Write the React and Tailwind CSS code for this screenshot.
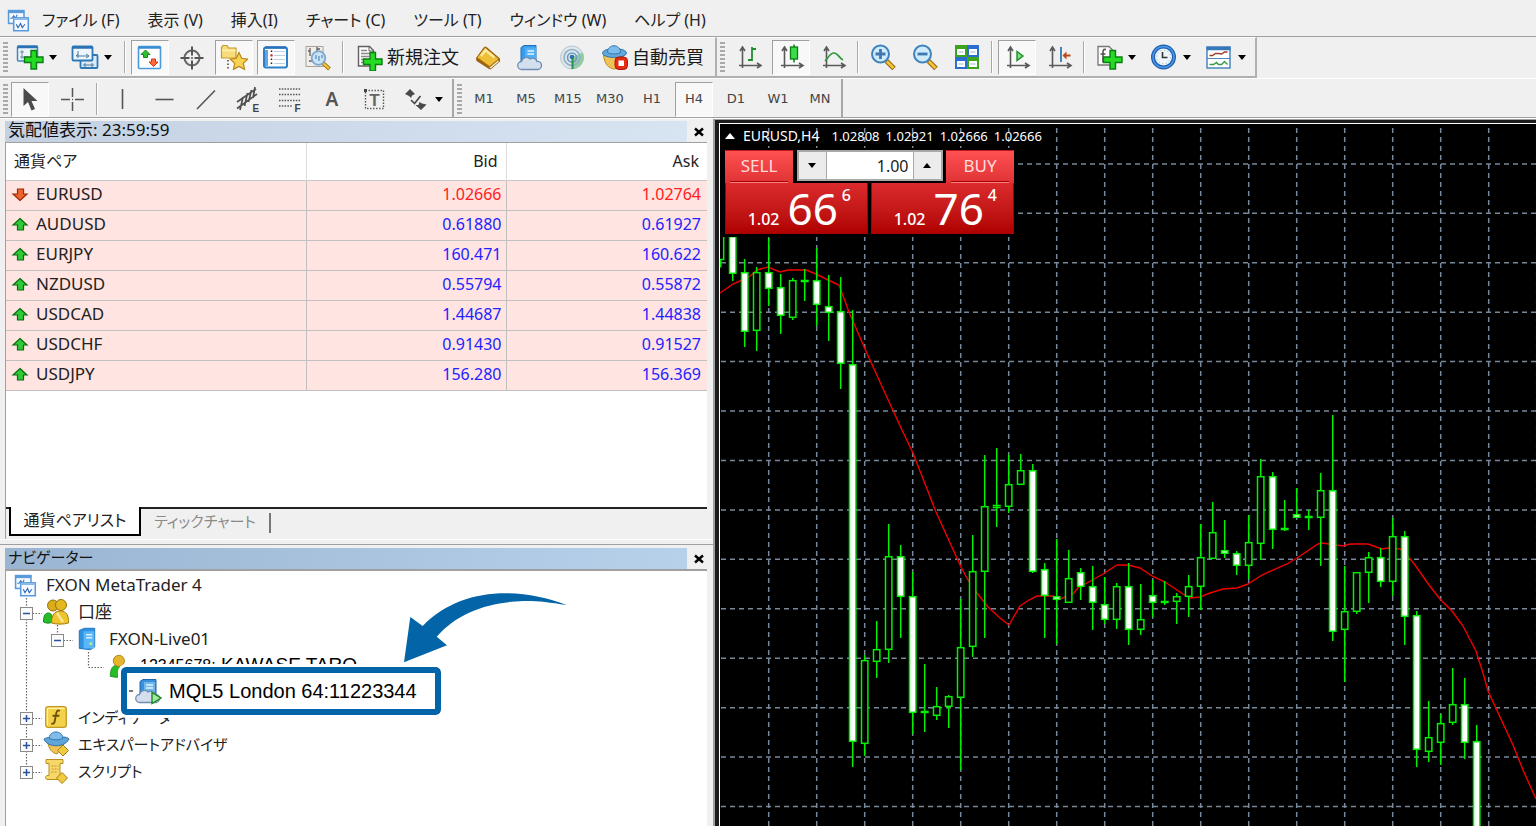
import React, { useState } from "react";

const menus = ["ファイル (F)", "表示 (V)", "挿入(I)", "チャート (C)", "ツール (T)", "ウィンドウ (W)", "ヘルプ (H)"];

const quotes = [
  { symbol: "EURUSD", bid: "1.02666", ask: "1.02764", up: false },
  { symbol: "AUDUSD", bid: "0.61880", ask: "0.61927", up: true },
  { symbol: "EURJPY", bid: "160.471", ask: "160.622", up: true },
  { symbol: "NZDUSD", bid: "0.55794", ask: "0.55872", up: true },
  { symbol: "USDCAD", bid: "1.44687", ask: "1.44838", up: true },
  { symbol: "USDCHF", bid: "0.91430", ask: "0.91527", up: true },
  { symbol: "USDJPY", bid: "156.280", ask: "156.369", up: true },
];

const timeframes = ["M1", "M5", "M15", "M30", "H1", "H4", "D1", "W1", "MN"];

// [high, body top, body bottom, low, bearish]
const candles = [
  [236, 236, 274, 281, 1], [259, 272, 332, 347, 1], [267, 272, 331, 351, 0], [238, 272, 289, 306, 1],
  [274, 287, 316, 334, 1], [278, 280, 318, 320, 0], [269, 281, 281, 301, 0], [248, 280, 305, 326, 1],
  [275, 306, 313, 341, 1], [277, 311, 364, 389, 1], [310, 364, 742, 767, 1], [655, 660, 744, 756, 0],
  [621, 649, 662, 678, 0], [524, 556, 650, 663, 0], [545, 556, 597, 638, 1], [572, 596, 713, 734, 1],
  [664, 712, 712, 732, 0], [687, 706, 716, 720, 0], [695, 696, 707, 728, 0], [599, 647, 698, 770, 0],
  [535, 571, 647, 657, 0], [455, 506, 572, 638, 0], [448, 505, 508, 527, 0], [455, 484, 507, 513, 0],
  [454, 470, 485, 485, 0], [464, 470, 572, 573, 1], [563, 569, 596, 638, 1], [539, 596, 600, 644, 1],
  [550, 578, 603, 603, 0], [568, 572, 587, 600, 1], [566, 586, 603, 630, 1], [577, 604, 620, 624, 1],
  [583, 586, 620, 629, 0], [563, 586, 630, 645, 1], [584, 619, 630, 635, 0], [580, 595, 603, 617, 1],
  [581, 601, 603, 605, 0], [593, 596, 602, 624, 0], [575, 586, 597, 617, 0], [524, 557, 587, 610, 0],
  [502, 532, 559, 559, 0], [520, 550, 554, 558, 1], [551, 553, 566, 575, 1], [515, 542, 566, 579, 0],
  [459, 476, 544, 560, 0], [472, 476, 530, 549, 1], [500, 529, 529, 531, 0], [488, 514, 518, 518, 1],
  [510, 517, 517, 530, 0], [473, 490, 518, 566, 0], [415, 490, 632, 641, 1], [566, 611, 630, 682, 0],
  [572, 572, 612, 614, 0], [552, 557, 573, 603, 0], [548, 557, 582, 587, 1], [518, 536, 582, 596, 0],
  [531, 536, 617, 645, 1], [611, 615, 750, 767, 1], [701, 737, 752, 762, 0], [714, 723, 743, 765, 0],
  [668, 704, 723, 725, 0], [678, 704, 743, 759, 1], [725, 741, 860, 860, 1],
];

const average =
  "720,293 733,284 742,280 749,277 757,270 768,267 780,272 788,270 806,270 816,274 828,280 839,285 849,312 865,349 " +
  "885,393 902,430 913,453 936,512 961,567 968,580 977,593 988,607 1000,618 1009,625 1020,606 1029,600 1037,596 " +
  "1053,596 1060,599 1073,594 1078,588 1103,574 1117,565 1128,565 1140,568 1152,576 1165,582 1183,594 1190,598 " +
  "1200,597 1210,593 1223,589 1237,588 1248,584 1262,575 1287,564 1297,558 1318,544 1322,543 1343,546 1350,544 " +
  "1368,544 1382,549 1388,548 1400,549 1407,555 1415,565 1429,585 1440,599 1452,611 1463,626 1476,651 1483,673 " +
  "1488,691 1513,745 1523,770 1536,799";

function Icon({ size = 28, children }) {
  return (
    <svg width={size} height={size} viewBox="0 0 28 28" fill="none" className="shrink-0" aria-hidden="true">
      {children}
    </svg>
  );
}

const PlusMark = () => (
  <path d="M15 7.500h5.500v6.500h6.500v5.500h-6.500v6.500h-5.500v-6.500h-6.500v-5.500h6.500z" fill="#25dc25" stroke="#0b7d10" strokeWidth="1.400" />
);

const NewChartIcon = () => (
  <Icon>
    <rect x="1.500" y="3" width="20" height="15" rx="1" fill="#eef6fd" stroke="#3f86c0" strokeWidth="1.500" />
    <path d="M1.500 4h20" stroke="#2a72b5" strokeWidth="2.500" />
    <path d="M6 7v9M4 9h4M4 14h8" stroke="#6c8ba8" />
    <PlusMark />
  </Icon>
);

const ProfilesIcon = () => (
  <Icon>
    <rect x="9.500" y="12" width="17" height="13" rx="1" fill="#dcebf8" stroke="#2f78b6" strokeWidth="1.800" />
    <path d="M12 22h11M14 20v4M21 20v4" stroke="#4e7898" />
    <rect x="1.500" y="3.500" width="20" height="14" rx="1" fill="#eef6fd" stroke="#2f78b6" strokeWidth="1.800" />
    <path d="M1.500 4.500h20" stroke="#2a72b5" strokeWidth="2.500" />
    <path d="M5 13h13M7 8v7M15 11l3 2-3 2M7 11l-2 2" stroke="#4e7898" />
  </Icon>
);

const MarketWatchIcon = () => (
  <Icon>
    <rect x="2.500" y="3.500" width="22" height="22" rx="1" fill="#fff" stroke="#4a9ade" strokeWidth="1.600" />
    <path d="M2.500 4.500h22" stroke="#3b8dd6" strokeWidth="2.500" />
    <path d="M9.500 7l4.500 4.500h-2.500v3h-4v-3H5z" fill="#2cc02c" stroke="#0d8a1a" />
    <path d="M17.500 23.500l4.500-4.500h-2.500v-3h-4v3H13z" fill="#ff6a3d" stroke="#d8350d" />
  </Icon>
);

const CrosshairIcon = () => (
  <Icon>
    <circle cx="14" cy="15" r="7.500" stroke="#666" strokeWidth="2" />
    <path d="M14 3.500v9M14 17.500v9M2.500 15h9M16.500 15h9" stroke="#555" strokeWidth="2" />
    <circle cx="14" cy="15" r="1" fill="#555" />
  </Icon>
);

const NavigatorIcon = () => (
  <Icon>
    <path d="M1.500 15V4.500l1.500-2h4l1.500 2.500h7.500v10z" fill="#f6dc7a" stroke="#c79a28" strokeWidth="1.200" />
    <path d="M2 7.500h13.500" stroke="#fff0b5" strokeWidth="1.500" />
    <path d="M8 17v10" stroke="#444" strokeWidth="1.500" strokeDasharray="1.500 2" />
    <path d="M19 9.500l2.700 5.800 6 .8-4.400 4.300 1.200 6-5.500-3-5.500 3 1.200-6-4.400-4.300 6-.8z" fill="#f8d253" stroke="#b98618" strokeWidth="1.200" />
  </Icon>
);

const TerminalIcon = () => (
  <Icon>
    <rect x="2" y="4.500" width="23" height="20" rx="2" fill="#fff" stroke="#2d7fc9" strokeWidth="2" />
    <path d="M3 4.500h21" stroke="#2672bb" strokeWidth="2.500" />
    <path d="M4.500 7v16" stroke="#5fa6e0" strokeWidth="3" />
    <path d="M12 8.500h11M12 12.500h11M12 16.500h11M12 20.500h11" stroke="#bcd0e2" />
    <path d="M9.500 7.500v15" stroke="#222" strokeWidth="1.500" strokeDasharray="1.500 2.500" />
    <path d="M9.500 11.500v2" stroke="#e02020" strokeWidth="2" />
  </Icon>
);

const TesterIcon = () => (
  <Icon>
    <rect x="2" y="3.500" width="17" height="20" fill="#f1eeea" stroke="#aaa39b" />
    <path d="M6 5v8M4 8h2M13 4v7M13 6h3M5 18h4" stroke="#5f5f5f" strokeWidth="1.300" />
    <path d="M19 20l6.500 6" stroke="#a8770f" strokeWidth="4" />
    <path d="M19 20l6 5.500" stroke="#f3c542" strokeWidth="2" />
    <circle cx="14.500" cy="15" r="6.800" fill="#c5e2f7" fillOpacity=".9" stroke="#7fa9cf" strokeWidth="1.800" />
    <path d="M12 16v-4M15 18v-5M18 15v-3" stroke="#5b92c4" strokeWidth="1.300" />
  </Icon>
);

const NewOrderIcon = () => (
  <Icon>
    <path d="M2.500 3.500h11l4 4v15.500h-15z" fill="#fdfdfd" stroke="#606060" strokeWidth="1.400" />
    <path d="M13 3.500v4.500h4.500" stroke="#606060" />
    <path d="M5 7.500h6M5 10.500h10M5 13.500h8M5 16.500h5M5 19.500h4" stroke="#8a8a8a" strokeWidth="1.300" />
    <g transform="translate(-1 2)"><PlusMark /></g>
  </Icon>
);

const BookIcon = () => (
  <Icon>
    <path d="M2 15l8-11 2-.5 14 12v3l-9.500 8-1.500-.5L2.500 18z" fill="#9c6410" />
    <path d="M3 14.500L11 4.500l14 11.500-9.500 7.500z" fill="#f0bf38" stroke="#a96f12" />
    <path d="M7 13l4.500-6 9 7.500" stroke="#fde99a" strokeWidth="2.500" />
    <path d="M16 25l8.500-7" stroke="#f7efcf" strokeWidth="1.500" />
  </Icon>
);

const Cloud = () => (
  <path d="M6 25.500a4 4 0 0 1-.5-8 5 5 0 0 1 8.500-2.500 4.500 4.500 0 0 1 7 2.500 4 4 0 0 1 1 8z" fill="#d4dfee" stroke="#6d8cb4" strokeWidth="1.300" />
);

const VpsIcon = () => (
  <Icon>
    <path d="M5 4.500l3-2h12v17H5z" fill="#3a9be8" stroke="#1770c0" />
    <path d="M9 4.500h11v14H9z" fill="#4fb0f6" />
    <path d="M11.500 8h6.500M11.500 11h6.500" stroke="#e2f4ff" strokeWidth="1.500" />
    <g transform="translate(0 1)"><Cloud /></g>
  </Icon>
);

const SignalsIcon = () => (
  <Icon>
    <circle cx="14" cy="14.500" r="11.500" fill="#dfe7ea" stroke="#b6c6cf" />
    <path d="M14 14.500l10.500-5a11.500 11.500 0 0 1-10.500 16.500z" fill="#7cc489" fillOpacity=".75" />
    <circle cx="14" cy="14.500" r="8" stroke="#8fb0c8" strokeWidth="1.600" />
    <circle cx="14" cy="14.500" r="4.500" stroke="#6b9ac2" strokeWidth="1.600" />
    <circle cx="14" cy="14" r="2.300" fill="#2f6fb3" />
    <path d="M14.500 15v11" stroke="#25914a" strokeWidth="2" />
  </Icon>
);

const AutoTradeIcon = () => (
  <Icon>
    <path d="M2.500 12c1 9 5 13.500 11 14 5-1 8-6 9-14z" fill="#efc356" stroke="#b98a22" />
    <ellipse cx="13.500" cy="10" rx="12" ry="4.500" fill="#63a8dc" stroke="#3477ad" />
    <path d="M6.500 9.500c0-9 13-9 13 0-4 2-9 2-13 0z" fill="#7ebdeb" stroke="#3477ad" />
    <rect x="14" y="14" width="12.500" height="12.500" rx="4" fill="#e22c14" stroke="#ac1808" />
    <rect x="17.500" y="17.500" width="5.500" height="5.500" fill="#fff" />
  </Icon>
);

const Axes = () => (
  <path d="M7.500 25V5M5 8l2.500-4L10 8M4 22.500h21M22 20l4 2.500-4 2.500" stroke="#5a5a5a" strokeWidth="1.600" />
);

const BarChartIcon = () => (
  <Icon><Axes /><path d="M17 4v14M17 6h4M13 17h4" stroke="#1f8f2c" strokeWidth="1.800" /></Icon>
);

const CandleChartIcon = () => (
  <Icon>
    <Axes />
    <path d="M17 1.500v18" stroke="#0b7d10" strokeWidth="1.500" />
    <rect x="13.500" y="4" width="7" height="12" fill="#3bdc4a" stroke="#0b7d10" strokeWidth="1.300" />
  </Icon>
);

const LineChartIcon = () => (
  <Icon><Axes /><path d="M6 18c3-3 5-8 9-8s5 5 9 7" stroke="#2f9a3c" strokeWidth="1.700" /></Icon>
);

function ZoomIcon({ plus }) {
  return (
    <Icon>
      <path d="M17.500 18l7.500 7.500" stroke="#9b6c0d" strokeWidth="5" />
      <path d="M18 18.500l6.500 6.500" stroke="#f5c73f" strokeWidth="2.500" />
      <circle cx="11.500" cy="11" r="8.500" fill="#cfeafb" stroke="#3f83bd" strokeWidth="2" />
      <path d={plus ? "M6.500 11h10M11.500 6v10" : "M6.500 11h10"} stroke="#3f78ae" strokeWidth="2.800" />
    </Icon>
  );
}

const TileIcon = () => (
  <Icon>
    <path d="M2 2h12v12H2zM14 14h12v12H14z" fill="#3da41e" />
    <path d="M14 2h12v12H14zM2 14h12v12H2z" fill="#2a6fd0" />
    <path d="M4 6h8v6H4zM16 6h8v6h-8zM4 18h8v6H4zM16 18h8v6h-8z" fill="#fff" />
    <path d="M5.500 9h5M17.500 9h5M5.500 21h5M17.500 21h5" stroke="#9bb7d6" />
  </Icon>
);

const AutoScrollIcon = () => (
  <Icon><Axes /><path d="M14 8.500l6 4.500-6 4.500z" fill="#7fe07f" stroke="#1d8f2a" strokeWidth="1.400" /></Icon>
);

const ShiftIcon = () => (
  <Icon>
    <Axes />
    <path d="M16 4v15" stroke="#2a70b0" strokeWidth="1.700" />
    <path d="M17.500 12.500l4-4v3h4v2h-4v3z" fill="#c24515" />
  </Icon>
);

const IndicatorsIcon = () => (
  <Icon>
    <path d="M3 3.500h11l4 4v14.500H3z" fill="#fdfdfd" stroke="#777" strokeWidth="1.300" />
    <path d="M11 6.500c-3-.5-3 1-3 4v9M5.500 11h5" stroke="#555" strokeWidth="1.600" />
    <PlusMark />
  </Icon>
);

const ClockIcon = () => (
  <Icon>
    <circle cx="13.500" cy="14" r="10.500" fill="#eef5fc" stroke="#1b5fb4" strokeWidth="4" />
    <circle cx="13.500" cy="14" r="10.500" stroke="#4f96e2" strokeWidth="1.500" />
    <circle cx="13.500" cy="14" r="6.800" stroke="#8fa6bc" strokeDasharray="1 2.600" />
    <path d="M12.500 9v5.500h5" stroke="#333" strokeWidth="1.600" />
  </Icon>
);

const TemplateIcon = () => (
  <Icon>
    <rect x="2" y="4" width="23" height="21" fill="#fff" stroke="#4b86c0" strokeWidth="1.500" />
    <path d="M1.500 5.500h24" stroke="#3577b8" strokeWidth="3.500" />
    <path d="M2 15.500h23" stroke="#4b86c0" />
    <path d="M4.500 12.500h3l3-2h3l3 .5 3-2h3" stroke="#a03a2a" strokeWidth="1.400" />
    <path d="M4.500 21.500h4l3-2 2 2h3l3-3 3 3" stroke="#3c9a48" strokeWidth="1.400" />
  </Icon>
);

const CursorIcon = () => (
  <Icon><path d="M7.500 3v18l4.500-4 3.500 8.500 3.500-1.500-3.500-8h6z" fill="#4a4a4a" /></Icon>
);

const CrossIcon = () => (
  <Icon><path d="M14.500 3v9M14.500 17v9M3 14.500h9M17 14.500h9M14 14.500h1" stroke="#555" strokeWidth="1.500" /></Icon>
);

const VLineIcon = () => <Icon><path d="M14.500 4v20" stroke="#555" strokeWidth="1.600" /></Icon>;
const HLineIcon = () => <Icon><path d="M5.500 14.500h18" stroke="#555" strokeWidth="1.600" /></Icon>;
const TrendIcon = () => <Icon><path d="M5 24L23 5.500" stroke="#555" strokeWidth="1.600" /></Icon>;

const ChannelIcon = () => (
  <Icon>
    <path d="M3 17L22 4M3 23.500L23 9M6 25l3-13M10.500 21l3-13M14.500 17l3-12M19 13l2-11" stroke="#505050" strokeWidth="1.700" />
    <text x="18.500" y="26.500" fontSize="10" fontWeight="700" fill="#444" fontFamily="Liberation Sans, sans-serif">E</text>
  </Icon>
);

const FiboIcon = () => (
  <Icon>
    <path d="M3 4h22M3 9.500h22M3 15.500h22M3 21h13" stroke="#555" strokeWidth="1.500" strokeDasharray="1.500 1.300" />
    <text x="18.500" y="27" fontSize="10" fontWeight="700" fill="#444" fontFamily="Liberation Sans, sans-serif">F</text>
  </Icon>
);

const LabelIcon = () => (
  <Icon>
    <rect x="5.500" y="5.500" width="18" height="18" stroke="#555" strokeWidth="1.400" strokeDasharray="1.400 1.600" />
    <rect x="4" y="4" width="3" height="3" fill="#444" />
    <text x="14.500" y="21" fontSize="17" fontWeight="700" textAnchor="middle" fill="#666" fontFamily="Liberation Sans, sans-serif">T</text>
  </Icon>
);

const ArrowsIcon = () => (
  <Icon>
    <path d="M8 4l5 5-3 1.500-1 2.500-2-2-4-2z" fill="#4a4a4a" />
    <path d="M9 15l3.500 3.500 6-7.500" stroke="#4a4a4a" strokeWidth="1.700" />
    <path d="M19 25l-5.500-5h3l1-3 2.500 1.500 4.500 1z" fill="#4a4a4a" />
  </Icon>
);

const AppIcon = () => (
  <Icon size={24}>
    <rect x="3" y="3" width="18" height="15" fill="#f5faff" stroke="#5b9ada" strokeWidth="1.800" />
    <path d="M3 4.500h18" stroke="#5b9ada" strokeWidth="3" />
    <path d="M5 12h2l2-3 2 3 2-4" stroke="#3d78c4" strokeWidth="1.300" />
    <rect x="9" y="11.500" width="17" height="15" fill="#f5faff" stroke="#5b9ada" strokeWidth="1.800" />
    <path d="M9 13h17" stroke="#8abbe8" strokeWidth="2" />
    <path d="M12 19l2 4 3-5 2 5 3-4" stroke="#2d62b8" strokeWidth="1.300" />
  </Icon>
);

const AccountsIcon = () => (
  <Icon>
    <circle cx="11" cy="7.500" r="5.500" fill="#d9ac1a" stroke="#96720a" />
    <circle cx="19" cy="7" r="5.500" fill="#e5b81f" stroke="#96720a" />
    <path d="M1.500 24c0-7 2-9 5-9s4 3 4 9c-3 1.500-6 1.500-9 0z" fill="#27bd27" stroke="#108a14" />
    <path d="M9.500 25c0-8 3-12 9-12s8.500 5 8 12c-5 1.500-12 1.500-17 0z" fill="#efc42c" stroke="#a57c10" />
    <path d="M15 15l6 9" stroke="#fbe88e" strokeWidth="2.500" />
  </Icon>
);

const ServerIcon = () => (
  <Icon size={24}>
    <path d="M5 4l6-2.500h12V23l-5 3.500-13-1.500z" fill="#2f92e0" stroke="#1668b4" />
    <path d="M10 5h12.500v20H10z" fill="#5ab8fa" />
    <path d="M13 9h7M13 12.500h7" stroke="#d9f1ff" strokeWidth="1.700" />
    <rect x="17" y="18" width="3" height="3" fill="#c9e86a" />
  </Icon>
);

const UserIcon = () => (
  <Icon size={24}>
    <path d="M5 26c0-9 3-13 8-13s8 4 8 13c-5 1.500-11 1.500-16 0z" fill="#27bd27" stroke="#108a14" />
    <circle cx="15" cy="8" r="6.500" fill="#e5b52a" stroke="#a57c10" />
  </Icon>
);

const FunctionIcon = () => (
  <Icon size={24}>
    <rect x="2" y="2" width="24" height="24" rx="3" fill="#f4d14a" stroke="#c29a22" strokeWidth="1.500" />
    <path d="M4 24V4h20" stroke="#fdf0a8" strokeWidth="1.500" />
    <path d="M18.500 7c-3-1.500-4 .5-4.500 4l-1.500 8c-.5 2.500-1.500 3.500-4 2.500M10 12.500h8" stroke="#6b5408" strokeWidth="2.200" />
  </Icon>
);

const ExpertIcon = () => (
  <Icon>
    <path d="M6 13c1 6 4 10 9 11l7-10z" fill="#efc356" stroke="#b98a22" />
    <path d="M2 9c3 9 21 9 25 0-3-3-8-2-12 0-4-2-10-2-13 0z" fill="#5fa5da" stroke="#2f73ab" />
    <path d="M7 8c1-8 13-8 14 0-4 2.500-10 2.500-14 0z" fill="#7ebdeb" stroke="#2f73ab" />
    <path d="M21 15l5.500 5.500L21 26l-5.500-5.500z" fill="#f0ca41" stroke="#a97f10" />
  </Icon>
);

const ScriptIcon = () => (
  <Icon>
    <path d="M4 2.500h17v4h-3v12h3v4H5c-2-1-2-3 0-4h2v-12H4z" fill="#f6d768" stroke="#b8901d" />
    <path d="M9.500 9h7M9.500 12h7M9.500 15h5" stroke="#c29a2b" strokeDasharray="2 1" />
    <path d="M20 15.500l5.500 5.500L20 26.500 14.500 21z" fill="#f0ca41" stroke="#a97f10" />
  </Icon>
);

const CloudServerIcon = () => (
  <Icon>
    <path d="M6 4.500l3-2h13v18H6z" fill="#3a8fd8" stroke="#1e68b0" />
    <path d="M10 5h11v14H10z" fill="#6fb8ee" />
    <path d="M12 8h7M12 11h7" stroke="#e2f4ff" strokeWidth="1.500" />
    <Cloud />
    <path d="M18 15.500l9 5.500-9 5.500z" fill="#a6e8a0" stroke="#1b8a24" strokeWidth="1.400" />
  </Icon>
);

function Direction({ up }) {
  return (
    <svg width="18" height="18" viewBox="0 0 18 18" aria-hidden="true">
      {up
        ? <path d="M9 3.500l7 6.500h-3.500v5h-6v-5H2z" fill="#2fc936" stroke="#0c6a14" strokeWidth="1.200" />
        : <path d="M9 15.500L16 9h-3.500V4h-6v5H2z" fill="#f0642e" stroke="#9b2a08" strokeWidth="1.200" />}
    </svg>
  );
}

const Caret = () => (
  <svg width="8" height="5" viewBox="0 0 8 5" aria-hidden="true"><path d="M0 0h8L4 5z" fill="#000" /></svg>
);

const Grip = () => (
  <span className="w-[5px] h-[30px] mx-[3px] shrink-0 bg-[repeating-linear-gradient(#a8a8a8_0_2px,#f0f0f0_2px_4px)]" />
);

const Divider = () => <span className="w-[2px] h-8 mx-[5px] shrink-0 bg-[#a8a8a8] border-r border-white" />;

function ToolButton({ label, pressed, children }) {
  return (
    <button
      aria-label={label}
      aria-pressed={!!pressed}
      className={`w-[38px] h-[35px] shrink-0 flex items-center justify-center border ${
        pressed ? "bg-[#f8f8f8] border-t-[#a0a0a0] border-l-[#a0a0a0] border-b-white border-r-white" : "border-transparent"
      }`}
    >
      {children}
    </button>
  );
}

function DropButton({ label, children }) {
  return (
    <button aria-label={label} className="w-[55px] h-[35px] shrink-0 flex items-center gap-[5px] pl-[5px]">
      {children}
      <Caret />
    </button>
  );
}

function TextButton({ icon, children }) {
  return (
    <button className="h-[35px] shrink-0 flex items-center gap-[3px] text-[18px] leading-6 text-[#1a1a1a] whitespace-nowrap">
      {icon}
      <span>{children}</span>
    </button>
  );
}

function Toolbars() {
  const [frame, setFrame] = useState("H4");
  return (
    <div className="border-t border-[#a0a0a0]">
      <div className="flex">
        <div className="h-[41px] flex items-center border-t border-white border-b-2 border-b-[#b0b0b0] border-r-2 border-r-[#b0b0b0] w-[717px] shrink-0">
          <Grip />
          <DropButton label="新規チャート"><NewChartIcon /></DropButton>
          <DropButton label="表示設定"><ProfilesIcon /></DropButton>
          <span className="-ml-[2px] flex"><Divider /></span>
          <div className="flex gap-1">
            <ToolButton label="気配値表示" pressed><MarketWatchIcon /></ToolButton>
            <ToolButton label="データウィンドウ"><CrosshairIcon /></ToolButton>
            <ToolButton label="ナビゲーター" pressed><NavigatorIcon /></ToolButton>
            <ToolButton label="ターミナル" pressed><TerminalIcon /></ToolButton>
            <ToolButton label="ストラテジーテスター"><TesterIcon /></ToolButton>
          </div>
          <Divider />
          <div className="flex pl-[7px] gap-[10px]">
            <TextButton icon={<NewOrderIcon />}>新規注文</TextButton>
            <div className="flex gap-1">
              <ToolButton label="メタエディター"><BookIcon /></ToolButton>
              <ToolButton label="仮想ホスティング"><VpsIcon /></ToolButton>
              <ToolButton label="シグナル"><SignalsIcon /></ToolButton>
            </div>
            <TextButton icon={<AutoTradeIcon />}>自動売買</TextButton>
          </div>
        </div>
        <div className="h-[41px] flex items-center border-t border-white border-b-2 border-b-[#b0b0b0] border-r-2 border-r-[#b0b0b0] shrink-0">
          <Grip />
          <div className="flex gap-1 pl-[2px]">
            <ToolButton label="バーチャート"><BarChartIcon /></ToolButton>
            <ToolButton label="ローソク足" pressed><CandleChartIcon /></ToolButton>
            <ToolButton label="ラインチャート"><LineChartIcon /></ToolButton>
          </div>
          <Divider />
          <div className="flex gap-1">
            <ToolButton label="拡大"><ZoomIcon plus /></ToolButton>
            <ToolButton label="縮小"><ZoomIcon /></ToolButton>
            <ToolButton label="整列"><TileIcon /></ToolButton>
          </div>
          <Divider />
          <div className="flex gap-1">
            <ToolButton label="自動スクロール" pressed><AutoScrollIcon /></ToolButton>
            <ToolButton label="チャートシフト"><ShiftIcon /></ToolButton>
          </div>
          <Divider />
          <DropButton label="インディケータ"><IndicatorsIcon /></DropButton>
          <DropButton label="時間足設定"><ClockIcon /></DropButton>
          <DropButton label="定型チャート"><TemplateIcon /></DropButton>
        </div>
      </div>
      <div className="h-10 flex border-t border-white border-b border-b-[#a0a0a0]">
        <div className="flex items-center pt-[2px] border-r-2 border-[#a8a8a8] shrink-0">
          <Grip />
          <div className="flex gap-1">
            <ToolButton label="カーソル" pressed><CursorIcon /></ToolButton>
            <ToolButton label="十字カーソル"><CrossIcon /></ToolButton>
          </div>
          <Divider />
          <div className="flex gap-1 pr-1">
            <ToolButton label="垂直線"><VLineIcon /></ToolButton>
            <ToolButton label="水平線"><HLineIcon /></ToolButton>
            <ToolButton label="トレンドライン"><TrendIcon /></ToolButton>
            <ToolButton label="等距離チャネル"><ChannelIcon /></ToolButton>
            <ToolButton label="フィボナッチ"><FiboIcon /></ToolButton>
            <ToolButton label="テキスト"><span className="text-[19px] leading-6 font-semibold text-[#555]">A</span></ToolButton>
            <ToolButton label="テキストラベル"><LabelIcon /></ToolButton>
          </div>
          <DropButton label="矢印"><ArrowsIcon /></DropButton>
        </div>
        <div className="flex items-center gap-1 pt-[2px] border-r-2 border-[#a8a8a8] pr-[2px] shrink-0 [font-family:'DejaVu_Sans',sans-serif] text-[13px] text-[#444]">
          <span className="-mr-1 flex"><Grip /></span>
          {timeframes.map((t) => (
            <button
              key={t}
              onClick={() => setFrame(t)}
              className={`w-[38px] h-[35px] border text-center ${
                frame === t ? "bg-[#f8f8f8] border-t-[#a0a0a0] border-l-[#a0a0a0] border-b-white border-r-white" : "border-transparent"
              }`}
            >
              {t}
            </button>
          ))}
        </div>
      </div>
    </div>
  );
}

function PanelTitle({ title, look }) {
  return (
    <div className="h-[21px] flex">
      <h2 className={`flex-1 pl-[3px] leading-[18px] text-[#111] whitespace-nowrap ${look}`}>{title}</h2>
      <button aria-label="閉じる" className="w-5 pl-1 flex items-center justify-center">
        <svg width="10" height="10" viewBox="0 0 10 10" aria-hidden="true">
          <path d="M1 1.500l8 7M9 1.500l-8 7" stroke="#000" strokeWidth="2.400" />
        </svg>
      </button>
    </div>
  );
}

function MarketWatch() {
  return (
    <section>
      <PanelTitle title="気配値表示: 23:59:59" look="text-[17px] bg-linear-to-r from-[#c3d1e2] to-[#d7e4f2]" />
      <div className="border-t border-l border-[#a0a0a0] bg-white h-[365px]">
        <table className="w-full table-fixed border-collapse text-[16px] leading-5">
          <colgroup>
            <col className="w-[300px]" />
            <col className="w-[200px]" />
            <col />
          </colgroup>
          <thead>
            <tr className="h-[37px] border-b border-[#c8c8c8]">
              <th className="text-left font-normal pl-2 border-r border-[#dcdcdc]">通貨ペア</th>
              <th className="text-right font-normal pr-2 border-r border-[#dcdcdc]">Bid</th>
              <th className="text-right font-normal pr-2">Ask</th>
            </tr>
          </thead>
          <tbody>
            {quotes.map((q) => (
              <tr key={q.symbol} className={`h-[30px] bg-[#ffe4e1] border-b border-[#c0c0c0] ${q.up ? "text-[#2222ff]" : "text-[#ff2020]"}`}>
                <td className="border-r border-[#c0c0c0] pl-[5px] pb-[2px]">
                  <div className="flex items-center gap-[7px] text-[17px] text-[#222]">
                    <Direction up={q.up} />
                    {q.symbol}
                  </div>
                </td>
                <td className="border-r border-[#c0c0c0] text-right pr-1 pb-[2px]">{q.bid}</td>
                <td className="text-right pr-[6px] pb-[2px]">{q.ask}</td>
              </tr>
            ))}
          </tbody>
        </table>
      </div>
      <div className="flex h-8 border-l border-[#a0a0a0] leading-6 whitespace-nowrap">
        <span className="w-[3px] border-t-2 border-[#222]" />
        <button className="w-[132px] h-[29px] pb-[2px] text-[16px] bg-white border-2 border-t-0 border-black">通貨ペアリスト</button>
        <div className="flex-1 border-t-2 border-[#222] flex items-start">
          <button className="w-[128px] text-[15px] text-[#8a8a8a]">ティックチャート</button>
          <span className="w-[2px] h-5 mt-1 bg-[#777]" />
        </div>
      </div>
    </section>
  );
}

// Connector cell of the tree: dotted guides plus an optional expander box
function Guide({ up, down, across, sign }) {
  return (
    <svg width="31" height="27" viewBox="0 0 31 27" fill="none" className="shrink-0" aria-hidden="true">
      <g stroke="#666" strokeDasharray="1.500 1.500" strokeWidth="1.200">
        {up && <path d="M15.500 0v15" />}
        {down && <path d="M15.500 15v12" />}
        {across && <path d="M15.500 15.500h15.500" />}
      </g>
      {sign && <rect x="9.500" y="9.500" width="12" height="12" fill="#fbfbfb" stroke="#8a8a8a" />}
      {sign && <path d={sign === "+" ? "M12 15.500h7M15.500 12v7" : "M12 15.500h7"} stroke="#2a50a0" strokeWidth="1.500" />}
    </svg>
  );
}

function Node({ icon, label, children }) {
  return (
    <li className="h-[27px] flex items-center">
      {children}
      <span className="w-7 flex justify-center shrink-0">{icon}</span>
      <span className="pl-2">{label}</span>
    </li>
  );
}

function Navigator() {
  return (
    <section className="flex-1 flex flex-col">
      <PanelTitle title="ナビゲーター" look="text-[15px] bg-linear-to-r from-[#9ab5d2] to-[#b8d1eb]" />
      <div className="relative flex-1 border-t-2 border-l border-[#a0a0a0] bg-white text-[17px] leading-6 text-[#222] whitespace-nowrap">
        <ul className="pl-[5px] pb-10">
          <li className="h-[27px] flex items-center pl-[2px]"><AppIcon /><span className="pl-[9px]">FXON MetaTrader 4</span></li>
          <Node icon={<AccountsIcon />} label="口座"><Guide up down across sign="-" /></Node>
          <Node icon={<ServerIcon />} label="FXON-Live01"><Guide up down /><Guide up across sign="-" /></Node>
          <Node
            icon={<UserIcon />}
            label={
              <span className="[font-family:'Liberation_Sans',sans-serif] text-[19px] text-black">
                <span className="text-[16px]">12345678:</span> KAWASE TARO
              </span>
            }
          >
            <Guide up down /><Guide /><Guide up across />
          </Node>
          <li className="h-6 flex overflow-hidden"><Guide up down /></li>
          <Node icon={<FunctionIcon />} label={<span className="text-[15px]">インディケータ</span>}><Guide up down across sign="+" /></Node>
          <Node icon={<ExpertIcon />} label={<span className="text-[15px]">エキスパートアドバイザ</span>}><Guide up down across sign="+" /></Node>
          <Node icon={<ScriptIcon />} label={<span className="text-[15px]">スクリプト</span>}><Guide up across sign="+" /></Node>
        </ul>

        <div className="absolute left-[115px] top-[96px] w-[320px] h-12 flex items-center gap-[7px] pl-[2px] bg-white border-6 border-[#0364a8] rounded-[5px] outline-3 outline-white [font-family:'Liberation_Sans',sans-serif] text-[20px] text-black">
          <span className="w-1 border-t-2 border-dotted border-[#777]" />
          <span className="-ml-[6px] flex"><CloudServerIcon /></span>
          <span>MQL5 London 64:11223344</span>
        </div>
        <svg className="absolute left-[398px] top-[20px]" width="164" height="72" viewBox="404 591 164 72" aria-hidden="true">
          <path
            d="M404 662.300L410.300 617l12.400 9C445 603 475 593 507 593.300c21 .2 41 4.700 59.700 11.700-18.700-3-31.700-4.500-43.700-4-33 1-65 11-86.300 35.700l10.300 8.600z"
            fill="#0364a8"
          />
        </svg>
      </div>
    </section>
  );
}

function ChartCanvas() {
  return (
    <svg className="absolute inset-0 w-full h-full" viewBox="720 124 816 702" preserveAspectRatio="xMinYMin slice" fill="none" aria-label="EURUSD H4">
      <g stroke="#778899" strokeWidth="1.500" strokeDasharray="5 4">
        {Array.from({ length: 17 }, (_, i) => (
          <path key={i} d={`M${768.7 + i * 48} 124V826`} strokeDashoffset="5" />
        ))}
        {Array.from({ length: 14 }, (_, i) => (
          <path key={i} d={`M720 ${163.9 + i * 49.43}H1536`} strokeDashoffset="8" />
        ))}
      </g>
      <polyline points={average} stroke="#f00000" strokeWidth="1.400" />
      <g stroke="#00f000" strokeWidth="1.500">
        <path d="M720.500 183v40M723.700 236v23.500h-3v8" />
        {candles.map(([high, top, bottom, low, bearish], i) => {
          const x = 732.7 + i * 12;
          if (bottom - top < 4) {
            return <path key={i} d={`M${x} ${high}V${low}M${x - 4} ${top + 0.5}h8M${x - 4} ${bottom - 0.5}h8`} />;
          }
          return (
            <g key={i}>
              <path d={`M${x} ${high}V${low}`} />
              <rect x={x - 3.2} y={top + 0.7} width="6.400" height={bottom - top - 1.4} fill={bearish ? "#fff" : "#000"} />
            </g>
          );
        })}
      </g>
    </svg>
  );
}

function Price({ label, head, big, tail }) {
  return (
    <button aria-label={label} className="h-[51px] flex-1 flex items-end justify-end gap-1 pr-4 text-white bg-linear-to-b from-[#dc2a2c] to-[#b00000] border border-t-0 border-[#a80000]">
      <span className="text-[16px] leading-4 pb-[6px] font-medium">{head}</span>
      <span className="text-[44px] leading-[50px] pl-1">{big}</span>
      <span className="text-[16px] leading-4 self-start pt-1 font-medium">{tail}</span>
    </button>
  );
}

function OneClick() {
  const [volume, setVolume] = useState("1.00");
  const step = (d) => setVolume((v) => Math.max(0.01, Number(v) + d).toFixed(2));
  const tab = "w-[68px] h-[33px] shrink-0 flex flex-col justify-between items-center pt-[3px] text-[17px] leading-6 text-[#ffdcdc] bg-linear-to-b from-[#ff5052] to-[#e03234] border-t border-[#c01818]";
  return (
    <div className="w-[298px] pl-[5px] pr-1 pt-[2px] pb-[3px] bg-black">
      <div className="flex justify-between">
        <button className={tab}>SELL<span className="w-[58px] h-[2px] bg-[#a80000] border-b border-[#ff8080]" /></button>
        <div className="flex h-[31px] w-[146px] border-2 border-[#a8a8a8] bg-white">
          <button aria-label="数量を減らす" onClick={() => step(-0.01)} className="w-7 flex items-center justify-center bg-[#ececec] border-r border-[#a8a8a8]"><Caret /></button>
          <input
            aria-label="数量"
            value={volume}
            onChange={(e) => setVolume(e.target.value)}
            className="flex-1 min-w-0 text-right pr-1 text-[16px] leading-6 text-[#222] outline-none"
          />
          <button aria-label="数量を増やす" onClick={() => step(0.01)} className="w-7 flex items-center justify-center bg-[#ececec] border-l border-[#a8a8a8]"><span className="rotate-180 flex"><Caret /></span></button>
        </div>
        <button className={tab}>BUY<span className="w-[58px] h-[2px] bg-[#a80000] border-b border-[#ff8080]" /></button>
      </div>
      <div className="flex gap-[3px]">
        <Price label="SELL 1.02666" head="1.02" big="66" tail="6" />
        <Price label="BUY 1.02764" head="1.02" big="76" tail="4" />
      </div>
    </div>
  );
}

function Chart() {
  return (
    <main className="flex-1 min-w-0 flex border-t border-l-2 border-[#a0a0a0]">
      <div className="flex-1 flex border-t-3 border-l-4 border-[#1c1c1c]">
        <div className="relative flex-1 overflow-hidden bg-black border-t border-l border-white">
          <ChartCanvas />
          <div className="relative">
            <h1 className="flex items-center h-6 pl-[5px] text-white text-[14px] leading-5 whitespace-nowrap">
              <svg width="10" height="6" viewBox="0 0 10 6" aria-hidden="true"><path d="M0 6L5 0l5 6z" fill="#fff" /></svg>
              <span className="pl-2 pr-3">EURUSD,H4</span>
              <span className="flex gap-[6px] text-[13px]">
                <span>1.02808</span><span>1.02921</span><span>1.02666</span><span>1.02666</span>
              </span>
            </h1>
            <OneClick />
          </div>
        </div>
      </div>
    </main>
  );
}

export default function App() {
  return (
    <div className="min-h-screen flex flex-col bg-[#f0f0f0] text-[#222] overflow-hidden [font-family:'Noto_Sans','Noto_Sans_CJK_JP',sans-serif] [font-feature-settings:'palt']">
      <nav className="h-9 flex items-center pt-1 pl-[6px] text-[16px] leading-6 whitespace-nowrap">
        <AppIcon />
        <div className="flex gap-7 pl-3">
          {menus.map((m) => <button key={m}>{m}</button>)}
        </div>
      </nav>
      <Toolbars />
      <div className="flex-1 flex border-t border-white">
        <aside className="w-[713px] shrink-0 flex flex-col pt-[2px] pl-[5px] pr-[6px]">
          <MarketWatch />
          <div className="h-[9px] border-t border-white pt-1 -mx-[6px]"><div className="h-px bg-[#a0a0a0]" /></div>
          <Navigator />
        </aside>
        <Chart />
      </div>
    </div>
  );
}
